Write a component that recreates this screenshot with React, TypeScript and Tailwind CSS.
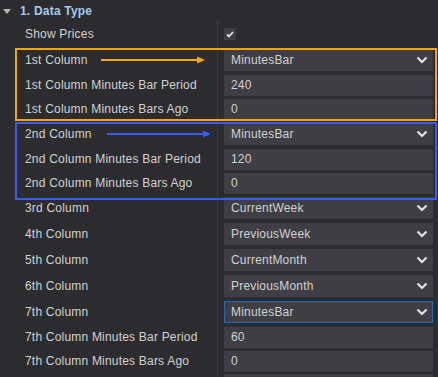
import React from "react";

type Row =
  | { label: string; type: "check" }
  | { label: string; type: "select"; value: string; focused?: boolean }
  | { label: string; type: "text"; value: string };

const rows: Row[] = [
  { label: "Show Prices", type: "check" },
  { label: "1st Column", type: "select", value: "MinutesBar" },
  { label: "1st Column Minutes Bar Period", type: "text", value: "240" },
  { label: "1st Column Minutes Bars Ago", type: "text", value: "0" },
  { label: "2nd Column", type: "select", value: "MinutesBar" },
  { label: "2nd Column Minutes Bar Period", type: "text", value: "120" },
  { label: "2nd Column Minutes Bars Ago", type: "text", value: "0" },
  { label: "3rd Column", type: "select", value: "CurrentWeek" },
  { label: "4th Column", type: "select", value: "PreviousWeek" },
  { label: "5th Column", type: "select", value: "CurrentMonth" },
  { label: "6th Column", type: "select", value: "PreviousMonth" },
  { label: "7th Column", type: "select", value: "MinutesBar", focused: true },
  { label: "7th Column Minutes Bar Period", type: "text", value: "60" },
  { label: "7th Column Minutes Bars Ago", type: "text", value: "0" },
];

function Chevron() {
  return (
    <svg width="12" height="8" viewBox="0 0 12 8" className="shrink-0">
      <polyline points="1.5,1.5 6,6 10.5,1.5" fill="none" stroke="#e2e2e2" strokeWidth="2.2" />
    </svg>
  );
}

function Field({ row }: { row: Row }) {
  if (row.type === "check") {
    return (
      <div className="flex h-[12px] w-[12px] items-center justify-center bg-[#3e3e44]">
        <svg width="8" height="7" viewBox="0 0 8 7">
          <polyline points="1,3.5 3,5.5 7,1" fill="none" stroke="#e6e6e6" strokeWidth="1.8" />
        </svg>
      </div>
    );
  }
  if (row.type === "select") {
    return (
      <div
        className={
          row.focused
            ? "flex h-[22px] w-full items-center justify-between border border-[#1f6cb4] bg-[#3e3e44] pl-[6px] pr-[4px]"
            : "flex h-[22px] w-full items-center justify-between bg-[#3e3e44] pl-[7px] pr-[5px]"
        }
      >
        <span>{row.value}</span>
        <Chevron />
      </div>
    );
  }
  return (
    <div className="flex h-[21px] w-full items-center bg-[#3e3e44] pl-[7px]">
      <span>{row.value}</span>
    </div>
  );
}

export default function App() {
  return (
    <div className="relative h-[377px] w-[438px] overflow-hidden bg-[#2c2c2f] text-[12px] tracking-[0.2px] text-[#d2d2d2] [font-family:'Liberation_Sans',Arial,sans-serif]">
      <div className="flex h-[21px] items-center">
        <svg width="20" height="21" viewBox="0 0 20 21">
          <polygon points="3,9 11,9 7,14" fill="#b4b4b4" />
        </svg>
        <span className="font-bold text-[#a3cbf0]">1. Data Type</span>
      </div>

      <div>
        {rows.map((row) => (
          <div
            key={row.label}
            className={row.type === "text" ? "flex h-[24px]" : "flex h-[26px]"}
          >
            <div className="flex w-[217px] items-center pl-[25px]">{row.label}</div>
            <div className="flex flex-1 items-center border-l border-[#3b3b3e] pl-[6px] pr-[5px]">
              <Field row={row} />
            </div>
          </div>
        ))}
        {/* next row, only its top edge is in view */}
        <div className="flex h-[26px]">
          <div className="w-[217px]" />
          <div className="flex flex-1 items-start border-l border-[#3b3b3e] pl-[6px] pr-[5px] pt-[1px]">
            <div className="h-[22px] w-full bg-[#3e3e44]" />
          </div>
        </div>
      </div>

      {/* annotations */}
      <div className="absolute left-[15px] top-[48px] h-[73px] w-[422px] border-2 border-[#f7a600]" />
      <div className="absolute left-[15px] top-[122px] h-[78px] w-[422px] border-2 border-[#3a5af4]" />

      <svg className="absolute left-[98px] top-[55px]" width="112" height="10" viewBox="0 0 112 10">
        <line x1="3" y1="5" x2="101" y2="5" stroke="#f7a600" strokeWidth="2" />
        <polygon points="99,1.5 107,5 99,8.5" fill="#f7a600" />
      </svg>
      <svg className="absolute left-[104px] top-[129px]" width="112" height="10" viewBox="0 0 112 10">
        <line x1="3" y1="5" x2="101" y2="5" stroke="#3a5af4" strokeWidth="2" />
        <polygon points="99,1.5 107,5 99,8.5" fill="#3a5af4" />
      </svg>
    </div>
  );
}
